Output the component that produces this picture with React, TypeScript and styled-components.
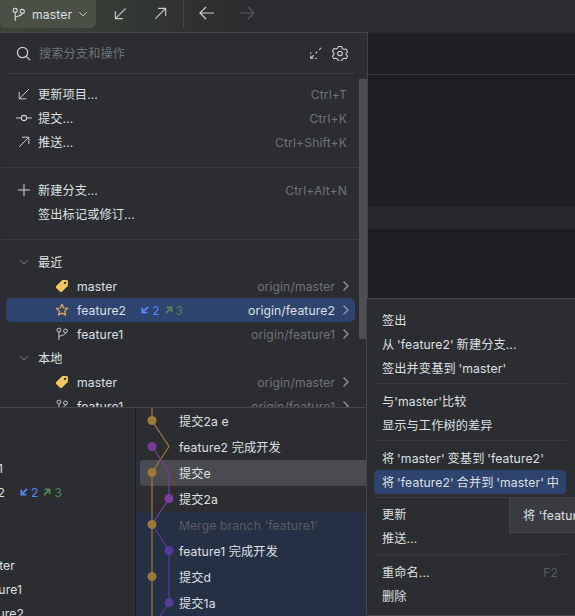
import React from "react";
import styled, { createGlobalStyle } from "styled-components";

const Global = createGlobalStyle`
  html, body { margin: 0; padding: 0; background: #1e1f22; }
  body { width: 575px; height: 616px; overflow: hidden; }
  #root { width: 575px; height: 616px; }
`;

const FONT = `Inter, "Noto Sans CJK SC", "Noto Sans", sans-serif`;

const Page = styled.div`
  position: relative;
  width: 575px;
  height: 616px;
  overflow: hidden;
  display: flex;
  flex-direction: column;
  font-family: ${FONT};
  font-size: 12.2px;
  letter-spacing: 0.1px;
  color: #dfe1e5;
  background: #1e1f22;
`;

const Toolbar = styled.header`
  height: 33px;
  flex: none;
  box-sizing: border-box;
  display: flex;
  align-items: flex-start;
  background: linear-gradient(90deg, #3c433a 0, #383e37 90px, #2f3230 180px, #2b2d30 260px);
`;

const BranchButton = styled.div`
  width: 96px;
  height: 28px;
  box-sizing: border-box;
  padding-left: 11px;
  display: flex;
  align-items: center;
  gap: 6px;
  background: #4a5046;
  border-radius: 0 0 6px 6px;
  color: #dfe1e5;
`;

const ToolIcon = styled.span<{ $gap: number }>`
  display: flex;
  width: 18px;
  height: 18px;
  align-items: center;
  justify-content: center;
  margin-left: ${(p) => p.$gap}px;
  margin-top: 4px;
  color: #ced0d6;
`;

const DimIcon = styled(ToolIcon)`
  color: #55585e;
`;

const ToolSep = styled.div`
  width: 1px;
  height: 28px;
  margin-left: 14px;
  background: #43454a;
`;

const Editor = styled.main`
  flex: 1;
  display: flex;
  flex-direction: column;
  padding-left: 367px;
`;

const EditorTabs = styled.div`
  height: 41px;
  flex: none;
  border-bottom: 1px solid #393b40;
`;

const EditorGap = styled.div`
  height: 132px;
  flex: none;
`;

const CaretLine = styled.div`
  height: 22px;
  flex: none;
  background: #26282e;
`;

const BottomPanel = styled.section`
  height: 209px;
  flex: none;
  display: flex;
  border-top: 1px solid #43454a;
  box-sizing: border-box;
  background: #2b2d30;
`;

const Sidebar = styled.div`
  width: 136px;
  flex: none;
  box-sizing: border-box;
  padding-top: 48px;
  border-right: 1px solid #1e1f22;
  overflow: hidden;
`;

const SideRow = styled.div`
  height: 24px;
  display: flex;
  align-items: center;
  overflow: hidden;
`;

const SideName = styled.div<{ $w: number }>`
  width: ${(p) => p.$w}px;
  flex: none;
  display: flex;
  justify-content: flex-end;
  overflow: hidden;
  white-space: nowrap;
`;

const SideSpacer = styled.div`
  height: 49px;
`;

const GraphPanel = styled.div`
  position: relative;
  width: 231px;
  flex: none;
  overflow: hidden;
`;

const GraphRow = styled.div<{ $band?: boolean; $dim?: boolean }>`
  height: 26px;
  box-sizing: border-box;
  padding-left: 43px;
  display: flex;
  align-items: center;
  white-space: nowrap;
  background: ${(p) => (p.$band ? "#263045" : "transparent")};
  color: ${(p) => (p.$dim ? "#5a5d63" : "#dfe1e5")};
`;

const GraphCurrent = styled(GraphRow)`
  background: #263045;
  padding-left: 4px;
`;

const GraphCurrentInner = styled.div`
  flex: 1;
  height: 26px;
  display: flex;
  align-items: center;
  padding-left: 39px;
  background: #4a4b4f;
  border-radius: 4px 0 0 4px;
`;

const GraphSvg = styled.svg`
  position: absolute;
  left: 0;
  top: 0;
`;

/* branch popup */
const Popup = styled.div`
  position: absolute;
  left: 0;
  top: 32px;
  width: 368px;
  height: 375px;
  box-sizing: border-box;
  background: #2b2d30;
  border-top: 1px solid #43454a;
  border-right: 1px solid #43454a;
  overflow: hidden;
`;

const SearchBar = styled.div`
  height: 40px;
  display: flex;
  align-items: center;
  padding-left: 16px;
  padding-right: 19px;
  color: #6f737a;
`;

const SearchInput = styled.span`
  margin-left: 8px;
  flex: 1;
  color: #6f737a;
`;

const SearchTools = styled.div`
  display: flex;
  align-items: center;
  gap: 9px;
  color: #ced0d6;
`;

const SearchLine = styled.div`
  height: 1px;
  margin: 0 12px 0 6px;
  background: #393b40;
`;

const Group = styled.div<{ $top: number; $bottom: number }>`
  padding: ${(p) => p.$top}px 0 ${(p) => p.$bottom}px;
`;

const GroupLine = styled.div`
  height: 1px;
  margin-left: 2px;
  margin-right: 9px;
  background: #393b40;
`;

const ActionRow = styled.div`
  height: 24px;
  display: flex;
  align-items: center;
  padding-right: 20px;
`;

const ActionIcon = styled.span`
  width: 38px;
  flex: none;
  display: flex;
  justify-content: center;
  padding-left: 10px;
  box-sizing: border-box;
  color: #ced0d6;
`;

const Shortcut = styled.span`
  margin-left: auto;
  color: #6f737a;
`;

const SectionRow = styled.div`
  height: 24px;
  display: flex;
  align-items: center;
  color: #dfe1e5;
`;

const Fold = styled.span`
  width: 38px;
  flex: none;
  display: flex;
  justify-content: center;
  box-sizing: border-box;
  padding-left: 10px;
  color: #9da0a8;
`;

const BranchRow = styled.div<{ $on?: boolean }>`
  height: 24px;
  margin: 0 12px 0 6px;
  display: flex;
  align-items: center;
  box-sizing: border-box;
  padding-left: 49px;
  padding-right: 5px;
  border-radius: 5px;
  background: ${(p) => (p.$on ? "#2e436e" : "transparent")};
`;

const BranchIcon = styled.span`
  width: 22px;
  flex: none;
  display: flex;
  align-items: center;
  color: #ced0d6;
`;

const Sync = styled.span`
  display: inline-flex;
  align-items: center;
  margin-left: 15px;
  font-size: 12px;
`;

const SyncIn = styled.span`
  color: #548af7;
  display: inline-flex;
  align-items: center;
  gap: 3px;
`;

const SyncOut = styled.span`
  color: #4f8756;
  display: inline-flex;
  align-items: center;
  gap: 3px;
  margin-left: 5px;
`;

const Remote = styled.span<{ $on?: boolean }>`
  margin-left: auto;
  margin-right: 7px;
  color: ${(p) => (p.$on ? "#dfe1e5" : "#6f737a")};
`;

const More = styled.span`
  display: flex;
  color: #9da0a8;
`;

const Scrollbar = styled.div`
  position: absolute;
  right: 0;
  top: 46px;
  width: 8px;
  height: 260px;
  background: #4d4f53;
`;

/* context menu */
const ContextMenu = styled.div`
  position: absolute;
  left: 366px;
  top: 298px;
  width: 212px;
  height: 318px;
  box-sizing: border-box;
  padding-top: 9px;
  background: #2b2d30;
  border: 1px solid #43454a;
  word-spacing: -0.7px;
`;

const MenuRow = styled.div<{ $on?: boolean }>`
  height: 24px;
  width: 192px;
  margin-left: 7px;
  box-sizing: border-box;
  padding: 0 8px;
  display: flex;
  align-items: center;
  justify-content: space-between;
  white-space: nowrap;
  border-radius: 4px;
  background: ${(p) => (p.$on ? "#2e436e" : "transparent")};
`;

const MenuLine = styled.div<{ $top: number; $bottom: number }>`
  height: 1px;
  width: 192px;
  margin: ${(p) => p.$top}px 0 ${(p) => p.$bottom}px 7px;
  background: #393b40;
`;

const MenuKey = styled.span`
  color: #5a5d63;
`;

const Tooltip = styled.div`
  position: absolute;
  left: 509px;
  top: 497px;
  width: 80px;
  height: 36px;
  box-sizing: border-box;
  padding-left: 13px;
  display: flex;
  align-items: center;
  white-space: nowrap;
  background: #393b40;
  border: 1px solid #43454a;
`;

type IP = { s?: number; w?: number };
const Ic = ({ s = 16, w = 1.1, children }: IP & { children: React.ReactNode }) => (
  <svg width={s} height={s} viewBox="0 0 16 16" fill="none" stroke="currentColor" strokeWidth={w}>
    {children}
  </svg>
);

const BranchGlyph = ({ s = 16, w = 1.1 }: IP) => (
  <Ic s={s} w={w}>
    <circle cx="4.5" cy="3.5" r="2.200" />
    <circle cx="12" cy="4.5" r="2.200" />
    <path d="M4.5 5.700V15M4.5 11.500c0-2 7.500-1.500 7.500-4.800" />
  </Ic>
);
const Incoming = ({ s = 16, w = 1.1 }: IP) => (
  <Ic s={s} w={w}>
    <path d="M13.5 2.5 2.5 13.5M2.5 5.5v8h8" />
  </Ic>
);
const Outgoing = ({ s = 16, w = 1.1 }: IP) => (
  <Ic s={s} w={w}>
    <path d="M2.5 13.5 13.5 2.5M5.5 2.5h8v8" />
  </Ic>
);
const ArrowL = ({ s = 16, w = 1.2 }: IP) => (
  <Ic s={s} w={w}>
    <path d="M15 8H1M7 2 1 8l6 6" />
  </Ic>
);
const ArrowR = ({ s = 16, w = 1.2 }: IP) => (
  <Ic s={s} w={w}>
    <path d="M1 8h14M9 2l6 6-6 6" />
  </Ic>
);
const Down = () => (
  <Ic s={10} w={1.3}>
    <path d="M2 5l6 6 6-6" />
  </Ic>
);
const Right = () => (
  <svg width="8" height="12" viewBox="0 0 8 12" fill="none" stroke="currentColor" strokeWidth="1.2">
    <path d="M1.5 1.5 6 6l-4.500 4.500" />
  </svg>
);
const Tag = () => (
  <svg width="14" height="14" viewBox="0 0 16 16">
    <path
      fill="#f2c55c"
      fillRule="evenodd"
      d="M9 1.200h4.300c.9 0 1.500.6 1.500 1.500V7c0 .5-.2.900-.5 1.200l-6.400 6.400c-.6.600-1.500.600-2.100 0L1.400 10.200c-.6-.6-.6-1.500 0-2.100L7.800 1.700C8.100 1.400 8.500 1.200 9 1.200ZM11.500 3.200a1.300 1.300 0 1 0 0 2.600 1.300 1.300 0 0 0 0-2.600Z"
    />
  </svg>
);
const Star = () => (
  <svg width="14" height="14" viewBox="0 0 14 14" fill="none" stroke="#e8b34b" strokeWidth="1.2">
    <path d="M7 1.300 8.700 5l4 .4-3 2.700.9 4L7 10 3.400 12.100l.9-4-3-2.700 4-.4Z" strokeLinejoin="round" />
  </svg>
);
const SmallIn = () => (
  <svg width="8" height="8" viewBox="0 0 9 9" fill="none" stroke="currentColor" strokeWidth="2">
    <path d="M8 1 1.500 7.500M1.500 2v5.500H7" />
  </svg>
);
const SmallOut = () => (
  <svg width="8" height="8" viewBox="0 0 9 9" fill="none" stroke="currentColor" strokeWidth="2">
    <path d="M1 8 7.500 1.500M2 1.500h5.500V7" />
  </svg>
);

const GOLD = "#9a7a3a";
const PURPLE = "#7a3d9c";
const INDIGO = "#563a9c";

const dots: [number, number, string][] = [
  [16, 12.5, GOLD],
  [16, 38.5, PURPLE],
  [16, 64.5, GOLD],
  [33, 90.5, PURPLE],
  [16, 116.5, GOLD],
  [33, 142.5, INDIGO],
  [16, 168.5, GOLD],
  [33, 194.5, INDIGO],
];

const Graph = () => (
  <GraphSvg width="60" height="208" viewBox="0 0 60 208" fill="none" strokeWidth="1.2">
    <path stroke={GOLD} d="M16 0v12.500L33 38.500 16 64.500V208" />
    <path stroke={PURPLE} d="M16 38.500 33 64.500v26L16 116.500" />
    <path stroke={INDIGO} d="M16 116.500 33 142.500v52L23 210" />
    {dots.map(([x, y, c]) => (
      <circle key={`${x}-${y}`} cx={x} cy={y} r="4.500" fill={c} stroke="none" />
    ))}
  </GraphSvg>
);

export default function App() {
  return (
    <Page>
      <Global />
      <Toolbar>
        <BranchButton>
          <BranchGlyph s={15} w={1.1} />
          <span>master</span>
          <Down />
        </BranchButton>
        <ToolIcon $gap={15}><Incoming s={15} w={1.2} /></ToolIcon>
        <ToolIcon $gap={22}><Outgoing s={15} w={1.2} /></ToolIcon>
        <ToolSep />
        <ToolIcon $gap={14}><ArrowL /></ToolIcon>
        <DimIcon $gap={22}><ArrowR /></DimIcon>
      </Toolbar>

      <Editor>
        <EditorTabs />
        <EditorGap />
        <CaretLine />
      </Editor>

      <BottomPanel>
        <Sidebar>
          <SideRow><SideName $w={3}>feature1</SideName></SideRow>
          <SideRow>
            <SideName $w={5}>feature2</SideName>
            <Sync>
              <SyncIn><SmallIn />2</SyncIn>
              <SyncOut><SmallOut />3</SyncOut>
            </Sync>
          </SideRow>
          <SideSpacer />
          <SideRow><SideName $w={15}>master</SideName></SideRow>
          <SideRow><SideName $w={22}>feature1</SideName></SideRow>
          <SideRow><SideName $w={24}>feature2</SideName></SideRow>
        </Sidebar>
        <GraphPanel>
          <GraphRow>提交2a e</GraphRow>
          <GraphRow>feature2 完成开发</GraphRow>
          <GraphCurrent><GraphCurrentInner>提交e</GraphCurrentInner></GraphCurrent>
          <GraphRow>提交2a</GraphRow>
          <GraphRow $band $dim>Merge branch 'feature1'</GraphRow>
          <GraphRow $band>feature1 完成开发</GraphRow>
          <GraphRow $band>提交d</GraphRow>
          <GraphRow $band>提交1a</GraphRow>
          <Graph />
        </GraphPanel>
      </BottomPanel>

      <Popup>
        <SearchBar>
          <svg width="15" height="15" viewBox="0 0 16 16" fill="none" stroke="#ced0d6" strokeWidth="1.3">
            <circle cx="7" cy="7" r="5.500" />
            <path d="M11 11 15 15" />
          </svg>
          <SearchInput>搜索分支和操作</SearchInput>
          <SearchTools>
            <Ic s={14} w={1.2}>
              <path d="M14 2 11.500 4.500M9.500 6.500 7.500 8.500M5.500 10.500 2.500 13.500M2 7v2M2 11v3h3M7 14h2" />
            </Ic>
            <Ic s={16} w={1.1}>
              <path d="M6.400 1.500h3.200l.6 2 1.800 1 2-.5 1.500 2.800-1.400 1.500v1.400l1.400 1.500-1.500 2.500-2-.5-1.800 1-.6 2H6.400l-.6-2-1.800-1-2 .5-1.500-2.500 1.400-1.500V7.800L.5 6.300 2 3.500 4 4l1.800-1Z" strokeLinejoin="round" />
              <circle cx="8" cy="8.500" r="2.300" />
            </Ic>
          </SearchTools>
        </SearchBar>
        <SearchLine />
        <Group $top={8} $bottom={13}>
          <ActionRow>
            <ActionIcon><Incoming s={14} /></ActionIcon>
            更新项目...
            <Shortcut>Ctrl+T</Shortcut>
          </ActionRow>
          <ActionRow>
            <ActionIcon>
              <Ic s={16} w={1.1}><path d="M0 8h5M11 8h5" /><circle cx="8" cy="8" r="2.600" /></Ic>
            </ActionIcon>
            提交...
            <Shortcut>Ctrl+K</Shortcut>
          </ActionRow>
          <ActionRow>
            <ActionIcon><Outgoing s={14} /></ActionIcon>
            推送...
            <Shortcut>Ctrl+Shift+K</Shortcut>
          </ActionRow>
        </Group>
        <GroupLine />
        <Group $top={10} $bottom={13}>
          <ActionRow>
            <ActionIcon>
              <Ic s={14} w={1.2}><path d="M8 1v14M1 8h14" /></Ic>
            </ActionIcon>
            新建分支...
            <Shortcut>Ctrl+Alt+N</Shortcut>
          </ActionRow>
          <ActionRow>
            <ActionIcon />
            签出标记或修订...
          </ActionRow>
        </Group>
        <GroupLine />
        <Group $top={10} $bottom={0}>
          <SectionRow><Fold><Down /></Fold>最近</SectionRow>
          <BranchRow>
            <BranchIcon><Tag /></BranchIcon>
            master
            <Remote>origin/master</Remote>
            <More><Right /></More>
          </BranchRow>
          <BranchRow $on>
            <BranchIcon><Star /></BranchIcon>
            feature2
            <Sync>
              <SyncIn><SmallIn />2</SyncIn>
              <SyncOut><SmallOut />3</SyncOut>
            </Sync>
            <Remote $on>origin/feature2</Remote>
            <More><Right /></More>
          </BranchRow>
          <BranchRow>
            <BranchIcon><BranchGlyph s={14} /></BranchIcon>
            feature1
            <Remote>origin/feature1</Remote>
            <More><Right /></More>
          </BranchRow>
          <SectionRow><Fold><Down /></Fold>本地</SectionRow>
          <BranchRow>
            <BranchIcon><Tag /></BranchIcon>
            master
            <Remote>origin/master</Remote>
            <More><Right /></More>
          </BranchRow>
          <BranchRow>
            <BranchIcon><BranchGlyph s={14} /></BranchIcon>
            feature1
            <Remote>origin/feature1</Remote>
            <More><Right /></More>
          </BranchRow>
        </Group>
        <Scrollbar />
      </Popup>

      <ContextMenu>
        <MenuRow>签出</MenuRow>
        <MenuRow>从 'feature2' 新建分支...</MenuRow>
        <MenuRow>签出并变基到 'master'</MenuRow>
        <MenuLine $top={3} $bottom={5} />
        <MenuRow>与'master'比较</MenuRow>
        <MenuRow>显示与工作树的差异</MenuRow>
        <MenuLine $top={3} $bottom={5} />
        <MenuRow>将 'master' 变基到 'feature2'</MenuRow>
        <MenuRow $on>将 'feature2' 合并到 'master' 中</MenuRow>
        <MenuLine $top={3} $bottom={4} />
        <MenuRow>更新</MenuRow>
        <MenuRow>推送...</MenuRow>
        <MenuLine $top={4} $bottom={5} />
        <MenuRow>重命名...<MenuKey>F2</MenuKey></MenuRow>
        <MenuRow>删除</MenuRow>
      </ContextMenu>
      <Tooltip>将 'feature2' 合并到 'master' 中</Tooltip>
    </Page>
  );
}
